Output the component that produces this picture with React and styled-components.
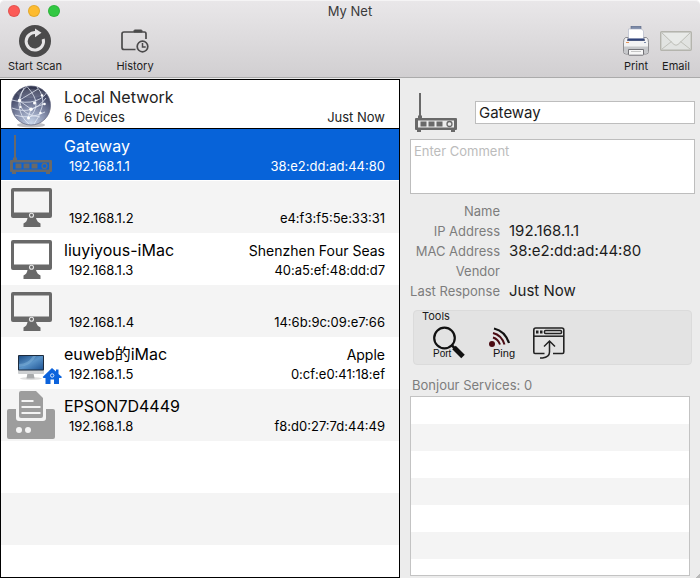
import React, { useState } from 'react';

import styled, { createGlobalStyle } from 'styled-components';

const devices = [
    { id: 1, icon: 'router', name: 'Gateway', ip: '192.168.1.1', vendor: '', mac: '38:e2:dd:ad:44:80' },
    { id: 2, icon: 'monitor', name: '', ip: '192.168.1.2', vendor: '', mac: 'e4:f3:f5:5e:33:31' },
    { id: 3, icon: 'monitor', name: 'liuyiyous-iMac', ip: '192.168.1.3', vendor: 'Shenzhen Four Seas', mac: '40:a5:ef:48:dd:d7' },
    { id: 4, icon: 'monitor', name: '', ip: '192.168.1.4', vendor: '', mac: '14:6b:9c:09:e7:66' },
    { id: 5, icon: 'imac', name: 'euweb的iMac', ip: '192.168.1.5', vendor: 'Apple', mac: '0:cf:e0:41:18:ef' },
    { id: 6, icon: 'printer', name: 'EPSON7D4449', ip: '192.168.1.8', vendor: '', mac: 'f8:d0:27:7d:44:49' }
];

const RouterIcon = () => (
    <svg width="42" height="39" viewBox="0 0 42 39" fill="#696969" aria-hidden="true">
        <path d="M4 0h2v22l1 1v2H3v-2l1-1z" />
        <path fillRule="evenodd" d="M1 25h40q1 0 1 1v10q0 1-1 1h-1v2h-4v-2H6v2H2v-2H1q-1 0-1-1V26q0-1 1-1zM3 27.500v7h36v-7z" />
        <path d="M5.500 28.500h6v5h-6zM13.500 28.500h6v5h-6zM21.500 28.500h6v5h-6z" />
        <circle cx="34.500" cy="31" r="2.500" fill="none" stroke="#696969" strokeWidth="1.300" />
    </svg>
);

const MonitorIcon = () => (
    <svg width="42" height="40" viewBox="-1 -1 42 40" fill="#696969" aria-hidden="true">
        <path fillRule="evenodd" d="M2 0h37q2 0 2 2v26q0 2-2 2H25q1 4 4.500 5.500v3.500h-17v-3.500q3.500-1.500 4-5.500H2q-2 0-2-2V2q0-2 2-2zM3 3.500v21h35v-21z" />
        <circle cx="20.500" cy="27.300" r="2" fill="none" stroke="#e8e8e8" strokeWidth="1.100" />
    </svg>
);

const ImacIcon = () => (
    <svg width="60" height="51" viewBox="-16 -18 60 51" overflow="visible" aria-hidden="true">
        <defs>
            <linearGradient id="screen" x1="0" y1="0" x2="1" y2="1">
                <stop offset="0" stopColor="#1d4e86" />
                <stop offset=".5" stopColor="#5a93c8" />
                <stop offset="1" stopColor="#1f5595" />
            </linearGradient>
        </defs>
        <ellipse cx="14" cy="23.500" rx="11" ry="1.500" fill="#dedede" />
        <path d="M10.500 18h6l1 5.500h-8z" fill="#a9abad" />
        <rect x="1" y="0" width="26" height="19" rx="1" fill="#cdcfd1" />
        <rect x="1" y="0" width="26" height="15.500" rx="1" fill="#1c2a3c" />
        <rect x="2" y="1" width="24" height="13.500" fill="url(#screen)" />
        <path d="M2 9q9 0 14-8h3q-5 10-17 11z" fill="#8fbfe2" opacity=".4" />
        <path d="M35 13l4 3.500v-2h2.500v4.500l3.500 3-.8 1H42V29h-5v-4.500h-3.500V29H28.500V23H26.500l-.8-1z" fill="#0c63dc" />
        <circle cx="35.200" cy="20.500" r="1.700" fill="none" stroke="#d9e9ff" strokeWidth="1" />
    </svg>
);

const PrinterIcon = () => (
    <svg width="48" height="48" viewBox="0 0 48 48" aria-hidden="true">
        <path d="M2 18h7v9q0 3 3 3h24q3 0 3-3v-9h7q2 0 2 2v26q0 2-2 2H2q-2 0-2-2V20q0-2 2-2z" fill="#9d9d9d" />
        <path d="M14 0h15l7 7v18q0 2-2 2H14q-2 0-2-2V2q0-2 2-2z" fill="#9d9d9d" />
        <path d="M14.500 10h12M14.500 16h19M14.500 22h19" stroke="#f4f4f4" strokeWidth="2" fill="none" />
        <circle cx="12" cy="39" r="3" fill="#f4f4f4" />
        <circle cx="21" cy="39" r="3" fill="#f4f4f4" />
    </svg>
);

const GlobeIcon = () => (
    <svg width="42" height="48" viewBox="0 -5 42 48" aria-hidden="true">
        <defs>
            <radialGradient id="globe" cx=".5" cy=".95" r=".95">
                <stop offset="0" stopColor="#c9d6ea" />
                <stop offset=".4" stopColor="#8790ad" />
                <stop offset=".75" stopColor="#4c5270" />
                <stop offset="1" stopColor="#2d3048" />
            </radialGradient>
        </defs>
        <ellipse cx="21" cy="40" rx="14" ry="2.500" fill="#bfbfc4" />
        <circle cx="21" cy="20.500" r="19.500" fill="url(#globe)" stroke="#5f637c" strokeWidth=".7" />
        <path d="M6 8q15-8 30 0q-4 5-15 5T6 8z" fill="#fff" opacity=".12" />
        <g fill="none" stroke="#e6ebf6" strokeWidth=".9" opacity=".85">
            <path d="M17 1.500Q8 8 9 20t10 19M17 1.500q9 10 9 17.500t-7 14M27 2q8 9 5 20t-8 17M14 3Q8 14 11 22t19 10M2 15q14 4 23 1t12-9M9 15.500L21 24l14-5.500M2 23q11 4 19 1.500T36 13M21 24L18 33M9 15.500L28 4M5 30q14 5 30-3" />
        </g>
        <g fill="#fff">
            <circle cx="9.500" cy="15.500" r="1.700" />
            <circle cx="21" cy="24.300" r="1.800" />
            <circle cx="24.500" cy="18" r="1.500" />
            <circle cx="32" cy="10.500" r="1.300" />
            <circle cx="34.500" cy="19" r="1.300" />
            <circle cx="18.500" cy="33" r="1.500" />
            <circle cx="30.500" cy="28" r="1.200" />
            <circle cx="10.500" cy="22" r="1.100" />
        </g>
    </svg>
);

const ScanIcon = () => (
    <svg width="32" height="32" viewBox="0 0 32 32" aria-hidden="true">
        <circle cx="16" cy="16" r="16" fill="#4b4a4b" />
        <path d="M17 7.700A8.700 8.700 0 1 0 24.200 14" fill="none" stroke="#e6e4e6" strokeWidth="3" />
        <path d="M16 3.500l6.500 4.300-6.500 4.500z" fill="#e6e4e6" />
    </svg>
);

const HistoryIcon = () => (
    <svg width="28" height="25" viewBox="0 0 28 25" fill="none" stroke="#4b4a4b" aria-hidden="true">
        <path d="M14.500 20.500H3Q1 20.500 1 18.500V5Q1 3 3 3h20.500q1.500 0 1.500 2v5" strokeWidth="1.700" />
        <path d="M13 3V1.500Q13 1 14 1h6q1 0 1 .5V3z" fill="#4b4a4b" />
        <circle cx="21.500" cy="17.500" r="5.300" strokeWidth="1.700" />
        <path d="M21.500 14v4h3.200" strokeWidth="1.500" />
    </svg>
);

const PrintIcon = () => (
    <svg width="28" height="30" viewBox="0 0 28 30" aria-hidden="true">
        <path d="M9 0h10v4H9z" fill="#7d8ba8" stroke="#5d6780" strokeWidth=".6" />
        <path d="M3.500 11.500q-2 1-2 5v9q0 2.500 2.500 2.500h2v-3h16v3h2q2.500 0 2.500-2.500v-9q0-4-2-5z" fill="#f2f2f3" stroke="#77777b" strokeWidth=".8" />
        <path d="M2 20.500h24v5q0 2-2 2H4q-2 0-2-2z" fill="#c6c7ca" />
        <path d="M6 11.500h16l1 3.300H5z" fill="#22305c" />
        <path d="M6.500 3h13l2 2v8h-15z" fill="#fff" stroke="#a9b0c2" strokeWidth=".6" />
        <path d="M6.500 12.500h15v1.800h-15z" fill="#31437a" />
        <path d="M4 16.500h3" stroke="#e5955c" />
        <path d="M22 16.500h2" stroke="#7d8ba8" />
        <path d="M6.500 23.500h15v5q0 .7-.7.700H7.200q-.7 0-.7-.7z" fill="#f7f7f7" stroke="#66676c" strokeWidth=".9" />
        <path d="M9 25.500h10" stroke="#c5c5c5" />
    </svg>
);

const EmailIcon = () => (
    <svg width="32" height="20" viewBox="0 0 32 20" aria-hidden="true">
        <rect x=".7" y=".7" width="30.600" height="18.600" rx="1" fill="#e1e3e1" stroke="#b4b4ad" strokeWidth="1.400" />
        <path d="M3 2h26L17 13.500q-1 .8-2 0z" fill="#e8eae8" />
        <path d="M2 2l12 11.500q2 1.500 4 0L30 2M2 18l9.500-7.500M30 18l-9.500-7.500" fill="none" stroke="#bfc0b9" strokeWidth="1" />
    </svg>
);

const PortIcon = () => (
    <svg width="34" height="34" viewBox="0 0 34 34" aria-hidden="true">
        <circle cx="12.500" cy="12" r="10.300" fill="none" stroke="#111" strokeWidth="2.200" />
        <path d="M19.500 19l4 4" stroke="#111" strokeWidth="2.500" />
        <path d="M22 21.500l9 9" stroke="#111" strokeWidth="5" />
        <IconText x="1" y="31" $size={10}>Port</IconText>
    </svg>
);

const PingIcon = () => (
    <svg width="34" height="34" viewBox="-3 0 34 34" fill="none" aria-hidden="true">
        <circle cx="7" cy="18" r="3" fill="#4a0b12" />
        <path d="M8 11.500q5 1.500 7 7M8 7q8.500 2 11.500 11.500" stroke="#4a0b12" strokeWidth="2" />
        <path d="M9 2.500q11 2.500 15 14.500" stroke="#111" strokeWidth="2.200" />
        <IconText x="8" y="31" $size={11}>Ping</IconText>
    </svg>
);

const BrowserIcon = () => (
    <svg width="34" height="34" viewBox="0 0 34 34" fill="none" stroke="#222" aria-hidden="true">
        <path d="M12.500 27.500H3Q1.800 27.500 1.800 26V4Q1.800 2 3.800 2h26q2 0 2 2v22q0 1.500-1.300 1.500H21" strokeWidth="1.600" />
        <path d="M2 10.200h30" strokeWidth="1.500" />
        <path d="M4 6h2.500M8 6h2.500" strokeWidth="3" />
        <rect x="12.500" y="4.500" width="17" height="3" rx="1" strokeWidth="1.500" />
        <path d="M17.500 15v11q0 5-7 6h-2.500M12 20.500l5.500-5.500 5.500 5.500" strokeWidth="1.500" />
    </svg>
);

const deviceIcons = {
    router: RouterIcon,
    monitor: MonitorIcon,
    imac: ImacIcon,
    printer: PrinterIcon
};

const App = () => {
    const [selectedId, setSelectedId] = useState(1);
    const [names, setNames] = useState({});
    const [comment, setComment] = useState('');

    const selected = devices.find(device => device.id === selectedId);
    const SelectedIcon = deviceIcons[selected.icon];

    const handleRename = (event) => {
        setNames({
            ...names,
            [selectedId]: event.target.value
        });
    };

    const nameOf = (device) => names[device.id] ?? device.name;

    return(<Window>
        <GlobalStyle />
        <Header>
            <TitleBar>
                <Lights>
                    <Light $color='#fc5b57' aria-label='Close' />
                    <Light $color='#fdbb2f' aria-label='Minimize' />
                    <Light $color='#32c842' aria-label='Zoom' />
                </Lights>
                <Title>My Net</Title>
            </TitleBar>
            <Toolbar>
                <ToolGroup $gap={44}>
                    <ToolButton $width={56}><ScanIcon />Start Scan</ToolButton>
                    <ToolButton $width={56}><HistoryIcon />History</ToolButton>
                </ToolGroup>
                <ToolGroup $gap={0}>
                    <ToolButton $width={40}><PrintIcon />Print</ToolButton>
                    <ToolButton $width={40}><EmailIcon />Email</ToolButton>
                </ToolGroup>
            </Toolbar>
        </Header>
        <Content>
            <Sidebar>
                <NetworkHeader>
                    <IconCell><GlobeIcon /></IconCell>
                    <NetworkText>
                        <Name as='h2'>Local Network</Name>
                        <Line>
                            <span>6 Devices</span>
                            <span>Just Now</span>
                        </Line>
                    </NetworkText>
                </NetworkHeader>
                <DeviceList>
                    {devices.map(device => {
                        const Icon = deviceIcons[device.icon];
                        return (
                            <li key={device.id}>
                                <DeviceRow
                                    $selected={device.id === selectedId}
                                    onClick={() => setSelectedId(device.id)}
                                >
                                    <IconCell><Icon /></IconCell>
                                    <DeviceText>
                                        <Line>
                                            <Name>{nameOf(device)}</Name>
                                            <Vendor>{device.vendor}</Vendor>
                                        </Line>
                                        <Line $indent>
                                            <span>{device.ip}</span>
                                            <span>{device.mac}</span>
                                        </Line>
                                    </DeviceText>
                                </DeviceRow>
                            </li>
                        );
                    })}
                </DeviceList>
            </Sidebar>
            <Details>
                <NameRow>
                    <SelectedIcon />
                    <NameInput
                        aria-label='Device name'
                        type='text'
                        value={nameOf(selected)}
                        onChange={handleRename}
                    />
                </NameRow>
                <Comment
                    aria-label='Comment'
                    placeholder='Enter Comment'
                    value={comment}
                    onChange={event => setComment(event.target.value)}
                />
                <Facts>
                    <dt>Name</dt><dd></dd>
                    <dt>IP Address</dt><dd>{selected.ip}</dd>
                    <dt>MAC Address</dt><dd>{selected.mac}</dd>
                    <dt>Vendor</dt><dd>{selected.vendor}</dd>
                    <dt>Last Response</dt><dd>Just Now</dd>
                </Facts>
                <Tools>
                    <ToolsTitle>Tools</ToolsTitle>
                    <ToolsRow>
                        <IconButton aria-label='Port scan'><PortIcon /></IconButton>
                        <IconButton aria-label='Ping'><PingIcon /></IconButton>
                        <IconButton aria-label='Open in browser'><BrowserIcon /></IconButton>
                    </ToolsRow>
                </Tools>
                <ServicesTitle>Bonjour Services: 0</ServicesTitle>
                <Services />
            </Details>
        </Content>
    </Window>);
}

export default App;

const GlobalStyle = createGlobalStyle`
    * {
        box-sizing: border-box;
    }
    body {
        margin: 0;
        background: #fff;
    }
    body, button, input, textarea {
        font-family: Inter, "Noto Sans CJK SC", sans-serif;
    }
    button {
        border: 0;
        padding: 0;
        background: none;
        color: inherit;
    }
    svg {
        display: block;
        flex: none;
    }
`

const Window = styled.div`
    min-height: 100vh;
    display: flex;
    flex-direction: column;
    background: #ececec;
    border-radius: 5px 5px 0 0;
    color: #1c1c1c;
    font-size: 13px;
    line-height: 16px;
`

const Header = styled.header`
    background: linear-gradient(#e9e7e9, #d1cfd1);
    border-top: 1px solid #f5f4f5;
    border-bottom: 1px solid #ababab;
    border-radius: 5px 5px 0 0;
`

const TitleBar = styled.div`
    display: grid;
    grid-template-columns: 1fr auto 1fr;
    align-items: center;
    height: 20px;
    padding: 0 8px;
`

const Lights = styled.div`
    display: flex;
    gap: 8px;
`

const Light = styled.button`
    width: 12px;
    height: 12px;
    border-radius: 50%;
    background: ${props => props.$color};
    box-shadow: inset 0 0 0 1px rgba(0, 0, 0, 0.1);
`

const Title = styled.h1`
    margin: 0;
    font-size: 13px;
    font-weight: 400;
    color: #3a3a3a;
`

const Toolbar = styled.nav`
    display: flex;
    justify-content: space-between;
    padding: 2px 4px 4px 7px;
`

const ToolGroup = styled.div`
    display: flex;
    gap: ${props => props.$gap}px;
`

const ToolButton = styled.button`
    display: grid;
    grid-template-rows: 36px 14px;
    place-items: center;
    width: ${props => props.$width}px;
    color: #1c1c1c;
    font-size: 11px;
    line-height: 14px;
    white-space: nowrap;
`

const Content = styled.main`
    flex: 1;
    display: grid;
    grid-template-columns: 4fr 3fr;
    padding-top: 1px;
`

const Sidebar = styled.section`
    display: flex;
    flex-direction: column;
    min-width: 0;
    border: 1px solid #000;
    background: #fff;
`

const NetworkHeader = styled.div`
    display: flex;
    height: 49px;
    border-bottom: 1px solid #000;
`

const IconCell = styled.div`
    flex: none;
    display: grid;
    place-items: center;
    width: 60px;
    margin-right: 3px;
`

const DeviceText = styled.div`
    flex: 1;
    min-width: 0;
    padding-top: 6px;
`

const NetworkText = styled(DeviceText)`
    color: #222;
`

const Line = styled.div`
    display: flex;
    justify-content: space-between;
    padding-left: ${props => props.$indent ? 5 : 0}px;
    padding-right: 14px;
`

const Name = styled.div`
    height: 23px;
    margin: 0;
    font-size: 16px;
    font-weight: 400;
    line-height: 23px;
    white-space: nowrap;
`

const Vendor = styled.div`
    flex: none;
    width: 140px;
    height: 23px;
    overflow: hidden;
    font-size: 14px;
    line-height: 23px;
    text-align: right;
    white-space: nowrap;
`

const DeviceList = styled.ul`
    flex: 1;
    margin: 0;
    padding: 0;
    list-style: none;
    background: repeating-linear-gradient(#fff 0 52px, #f4f4f4 52px 104px);
`

const DeviceRow = styled.button`
    display: flex;
    width: 100%;
    height: 52px;
    border-bottom: 1px solid ${props => props.$selected ? '#fff' : 'transparent'};
    background: ${props => props.$selected ? '#0763d9' : 'transparent'};
    color: ${props => props.$selected ? '#fff' : '#000'};
    font-size: 13px;
    line-height: 16px;
    text-align: left;
`

const Details = styled.section`
    display: flex;
    flex-direction: column;
    min-width: 0;
    padding: 12px 5px 2px 10px;
    background: linear-gradient(135deg, transparent 50%, #b8b8b8 50%) right bottom / 4px 4px no-repeat;
`

const NameRow = styled.div`
    display: flex;
    align-items: center;
    gap: 18px;
    height: 42px;
    padding-left: 5px;
`

const NameInput = styled.input`
    flex: 1;
    min-width: 0;
    height: 23px;
    border: 1px solid #bdbdbd;
    padding: 0 3px;
    background: #fff;
    color: #1c1c1c;
    font-size: 15px;
    outline: none;
`

const Comment = styled.textarea`
    height: 55px;
    margin-top: 6px;
    border: 1px solid #bdbdbd;
    padding: 3px;
    background: #fff;
    font-size: 13px;
    line-height: 16px;
    outline: none;
    resize: none;

    &::placeholder {
        color: #bcbcbc;
    }
`

const Facts = styled.dl`
    display: grid;
    grid-template-columns: 90px 1fr;
    grid-auto-rows: 20px;
    column-gap: 9px;
    margin: 7px 0 0;
    line-height: 20px;

    dt {
        justify-self: end;
        color: #7d7d7d;
        white-space: nowrap;
    }

    dd {
        margin: 0;
        font-size: 15px;
    }
`

const Tools = styled.section`
    height: 55px;
    margin: 9px 3px 0;
    border: 1px solid #dbdbdb;
    border-radius: 4px;
    background: #e3e3e3;
`

const ToolsTitle = styled.h3`
    margin: 0;
    padding-left: 8px;
    font-size: 11px;
    font-weight: 400;
    line-height: 10px;
`

const ToolsRow = styled.div`
    display: flex;
    gap: 16px;
    padding: 5px 18px;
`

const IconButton = styled.button`
    width: 34px;
    height: 34px;
`

const IconText = styled.text`
    fill: #111;
    stroke: none;
    font-family: "Liberation Sans", sans-serif;
    font-size: ${props => props.$size}px;
`

const ServicesTitle = styled.h3`
    margin: 12px 2px 3px;
    font-size: 13px;
    font-weight: 400;
    color: #7d7d7d;
`

const Services = styled.div`
    flex: 1;
    margin-right: 5px;
    border: 1px solid #c3c3c3;
    background: repeating-linear-gradient(#fff 0 27px, #f4f4f4 27px 54px);
`
